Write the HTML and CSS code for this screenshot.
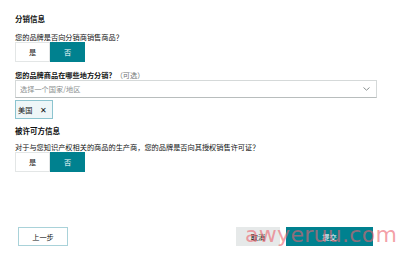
FILE: index.html
```html
<!DOCTYPE html>
<html lang="zh-CN">
<head>
    <meta charset="UTF-8">
    <title>分销信息</title>
    <link rel="stylesheet" href="styles.css">
</head>
<body>
    <div class="page">
        <h2 class="section-title first">分销信息</h2>
        <p class="question">您的品牌是否向分销商销售商品？</p>
        <div class="toggle">
            <button class="toggle-btn">是</button>
            <button class="toggle-btn active">否</button>
        </div>

        <p class="label">您的品牌商品在哪些地方分销？<span class="optional">（可选）</span></p>
        <div class="select">
            <span class="placeholder">选择一个国家/地区</span>
            <svg class="chevron" width="7" height="4" viewBox="0 0 7 4"><path d="M0.5 0.5 L3.5 3.2 L6.5 0.5" fill="none" stroke="#8a9090" stroke-width="1"/></svg>
        </div>
        <div class="tags">
            <span class="tag">美国 <span class="tag-x">✕</span></span>
        </div>

        <h2 class="section-title">被许可方信息</h2>
        <p class="question q2">对于与您知识产权相关的商品的生产商，您的品牌是否向其授权销售许可证？</p>
        <div class="toggle">
            <button class="toggle-btn">是</button>
            <button class="toggle-btn active">否</button>
        </div>

        <div class="footer">
            <button class="btn btn-back">上一步</button>
            <div class="footer-right">
                <button class="btn btn-cancel">取消</button>
                <button class="btn btn-submit">提交</button>
            </div>
        </div>
    </div>
    <div class="watermark">awyeruu.com</div>
</body>
</html>
```

FILE: styles.css
```css
body {
    margin: 0;
    background: #fff;
    color: #0f1111;
    font-family: "Noto Sans CJK SC", "Noto Sans", sans-serif;
    font-size: 7.2px;
    position: relative;
    width: 400px;
    height: 257px;
    overflow: hidden;
}
.page {
    padding: 14px 23px 0 15px;
}
.section-title {
    font-size: 7.5px;
    font-weight: bold;
    line-height: 10px;
    margin: 7px 0 0 0;
}
.section-title.first {
    margin-top: 0;
}
.question {
    margin: 9px 0 0 0;
    line-height: 9px;
}
.question.q2 {
    margin-top: 6px;
    line-height: 10px;
}
.toggle {
    display: flex;
    width: 70px;
    height: 20px;
}
.toggle-btn {
    flex: 1;
    border: 1px solid #e3e6e6;
    background: #fff;
    color: #0f1111;
    font-family: inherit;
    font-size: 7.2px;
    padding: 0;
}
.toggle-btn.active {
    background: #00818f;
    border-color: #00818f;
    color: #fff;
}
.label {
    margin: 8px 0 0 0;
    line-height: 10px;
    font-weight: bold;
}
.optional {
    font-weight: normal;
    color: #6f7373;
}
.select {
    height: 18px;
    box-sizing: border-box;
    border: 1px solid #d5d9d9;
    border-bottom-color: #b8bdbd;
    display: flex;
    align-items: center;
    justify-content: space-between;
    padding: 0 6px 0 4px;
}
.placeholder {
    color: #8a8f8f;
}
.tags {
    margin-top: 2px;
    display: flex;
}
.tag {
    display: flex;
    align-items: center;
    gap: 8px;
    height: 19px;
    box-sizing: border-box;
    padding: 0 5px 0 2px;
    background: #eef6f8;
    border: 1px solid #8cc4cf;
}
.tag-x {
    font-size: 8px;
}
.footer {
    display: flex;
    justify-content: space-between;
    align-items: center;
    margin-top: 55px;
    padding: 0 4px 0 3px;
}
.footer-right {
    display: flex;
    gap: 6px;
}
.btn {
    height: 19px;
    font-family: inherit;
    font-size: 7.2px;
    padding: 0;
    border: 1px solid transparent;
}
.btn-back {
    width: 50px;
    background: #fff;
    border-color: #a9d2d9;
    color: #0f1111;
}
.btn-cancel {
    width: 44px;
    background: #e6e9e9;
    color: #0f1111;
}
.btn-submit {
    width: 87px;
    background: #00818f;
    color: #fff;
}
.watermark {
    position: absolute;
    left: 245px;
    top: 222px;
    font-family: "DejaVu Sans", sans-serif;
    font-size: 22px;
    letter-spacing: 0.3px;
    color: rgba(236, 98, 110, 0.6);
    pointer-events: none;
}
```
